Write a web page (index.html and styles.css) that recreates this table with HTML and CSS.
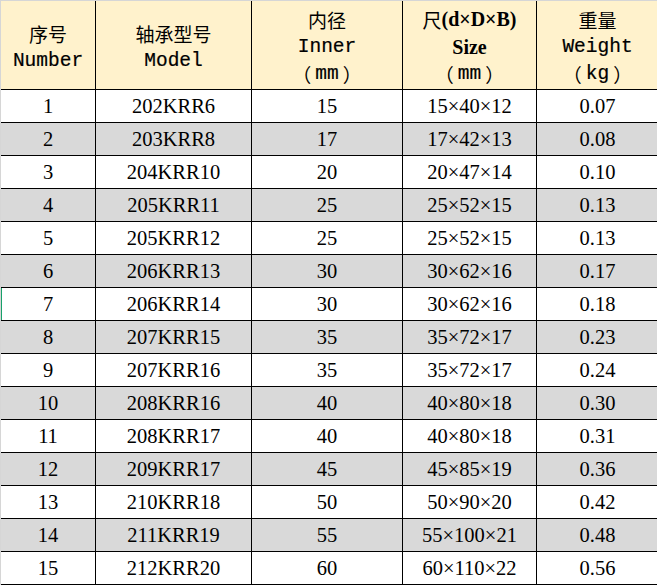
FILE: index.html
```html
<!DOCTYPE html>
<html lang="zh">
<head>
<meta charset="utf-8">
<title>Bearing table</title>
<link rel="stylesheet" href="styles.css">
</head>
<body>
<div class="sheet">
  <div class="grid" role="table">
    <div class="cell head" role="columnheader"><span class="line zh">序号</span><span class="line mono">Number</span></div>
    <div class="cell head" role="columnheader"><span class="line zh">轴承型号</span><span class="line mono">Model</span></div>
    <div class="cell head" role="columnheader"><span class="line zh">内径</span><span class="line mono">Inner</span><span class="line zh">（<span class="mono unit">mm</span>）</span></div>
    <div class="cell head" role="columnheader"><span class="line bold"><span class="zh">尺</span>(d×D×B)</span><span class="line bold">Size</span><span class="line zh">（<span class="mono unit">mm</span>）</span></div>
    <div class="cell head last" role="columnheader"><span class="line zh">重量</span><span class="line mono">Weight</span><span class="line zh">（<span class="mono unit">kg</span>）</span></div>

    <div class="cell">1</div><div class="cell">202KRR6</div><div class="cell">15</div><div class="cell">15×40×12</div><div class="cell last">0.07</div>
    <div class="cell alt">2</div><div class="cell alt">203KRR8</div><div class="cell alt">17</div><div class="cell alt">17×42×13</div><div class="cell alt last">0.08</div>
    <div class="cell">3</div><div class="cell">204KRR10</div><div class="cell">20</div><div class="cell">20×47×14</div><div class="cell last">0.10</div>
    <div class="cell alt">4</div><div class="cell alt">205KRR11</div><div class="cell alt">25</div><div class="cell alt">25×52×15</div><div class="cell alt last">0.13</div>
    <div class="cell">5</div><div class="cell">205KRR12</div><div class="cell">25</div><div class="cell">25×52×15</div><div class="cell last">0.13</div>
    <div class="cell alt">6</div><div class="cell alt">206KRR13</div><div class="cell alt">30</div><div class="cell alt">30×62×16</div><div class="cell alt last">0.17</div>
    <div class="cell marked">7</div><div class="cell">206KRR14</div><div class="cell">30</div><div class="cell">30×62×16</div><div class="cell last">0.18</div>
    <div class="cell alt">8</div><div class="cell alt">207KRR15</div><div class="cell alt">35</div><div class="cell alt">35×72×17</div><div class="cell alt last">0.23</div>
    <div class="cell">9</div><div class="cell">207KRR16</div><div class="cell">35</div><div class="cell">35×72×17</div><div class="cell last">0.24</div>
    <div class="cell alt">10</div><div class="cell alt">208KRR16</div><div class="cell alt">40</div><div class="cell alt">40×80×18</div><div class="cell alt last">0.30</div>
    <div class="cell">11</div><div class="cell">208KRR17</div><div class="cell">40</div><div class="cell">40×80×18</div><div class="cell last">0.31</div>
    <div class="cell alt">12</div><div class="cell alt">209KRR17</div><div class="cell alt">45</div><div class="cell alt">45×85×19</div><div class="cell alt last">0.36</div>
    <div class="cell">13</div><div class="cell">210KRR18</div><div class="cell">50</div><div class="cell">50×90×20</div><div class="cell last">0.42</div>
    <div class="cell alt">14</div><div class="cell alt">211KRR19</div><div class="cell alt">55</div><div class="cell alt">55×100×21</div><div class="cell alt last">0.48</div>
    <div class="cell">15</div><div class="cell">212KRR20</div><div class="cell">60</div><div class="cell">60×110×22</div><div class="cell last">0.56</div>
  </div>
</div>
</body>
</html>
```

FILE: styles.css
```css
html, body {
  margin: 0;
  padding: 0;
  background: #d6d6d6;
}

.sheet {
  padding: 1px 0 0 1px;
  width: 656px;
  overflow: hidden;
}

.grid {
  display: grid;
  grid-template-columns: 95px 156px 151px 134px 121px;
  grid-template-rows: 89px;
  grid-auto-rows: 33px;
  background: #fff;
}

.cell {
  box-sizing: border-box;
  border-right: 1px solid #000;
  border-bottom: 1px solid #000;
  background: #fff;
  display: flex;
  align-items: center;
  justify-content: center;
  font-family: "Liberation Serif", "Times New Roman", serif;
  font-size: 20.5px;
  color: #000;
  padding-top: 1px;
}

.cell.last {
  border-right: none;
}

.cell.alt {
  background: #d9d9d9;
}

.cell.marked {
  box-shadow: inset 1px 0 0 #17a06a;
}

.head {
  background: #fff2cc;
  flex-direction: column;
  padding-top: 5px;
}

.head .line {
  display: flex;
  align-items: center;
  justify-content: center;
  height: 27.5px;
  line-height: 27.5px;
  white-space: nowrap;
}

.zh {
  font-family: "Noto Sans CJK SC", sans-serif;
  font-size: 19px;
  font-weight: 400;
  color: #000;
}

.mono {
  font-family: "Liberation Mono", "Courier New", monospace;
  font-size: 19.5px;
  color: #000;
  -webkit-text-stroke: 0.2px #000;
}

.unit {
  margin: 0 4px;
}

.bold {
  font-family: "Liberation Serif", "Times New Roman", serif;
  font-weight: 700;
  font-size: 20px;
}

.bold .zh {
  font-weight: 400;
}
```
